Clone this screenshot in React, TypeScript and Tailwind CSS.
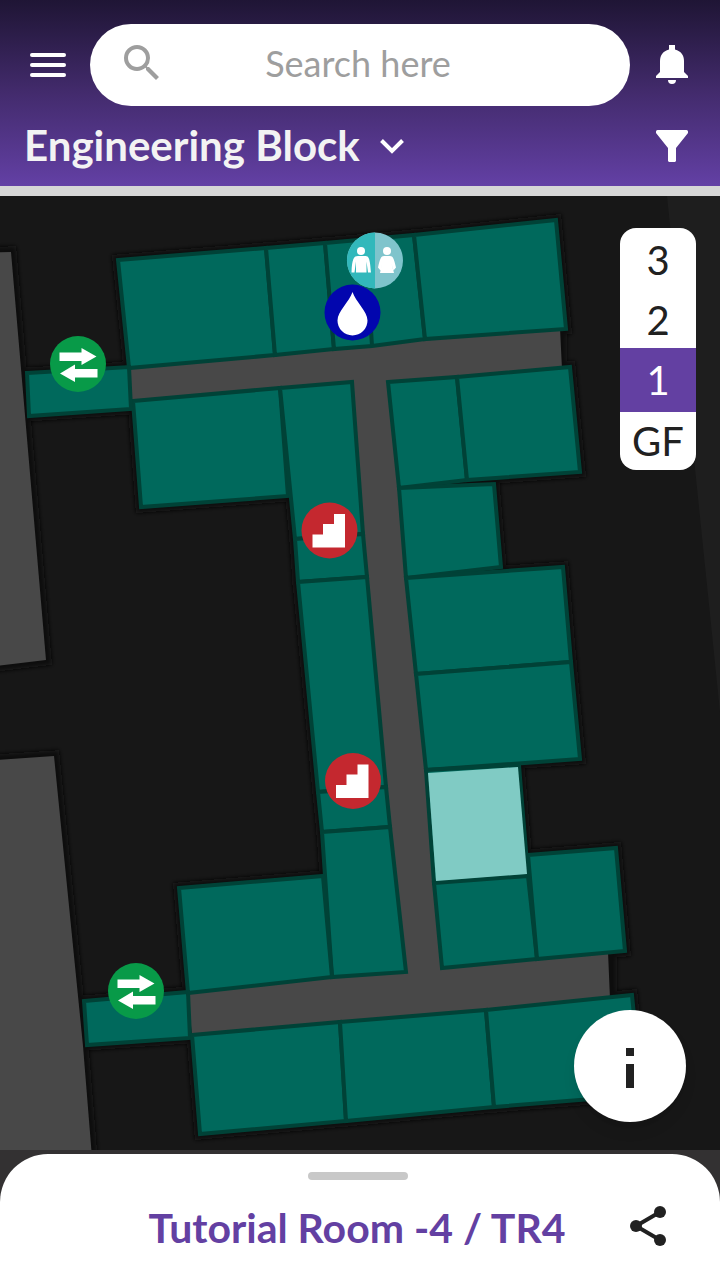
import React, { useState } from "react";

type Points = string;

const rooms: Points[] = [
  // north wing, upper row
  "118,260 266,248 275,355 129,368",
  "266,248 325,243 334,349 275,355",
  "325,243 414,235 425,339 372,346 334,349",
  "414,235 556,220 566,329 425,339",
  // north wing, lower row
  "133,401 280,388 288,496 141,507",
  "388,382 457,377 467,480 399,488",
  "457,377 570,367 580,472 467,480",
  // link bridges
  "27,373 129,367 131,409 29,416",
  "84,1001 188,992 190,1038 87,1045",
  // west side of the spine
  "280,388 352,382 363,534 295,539",
  "295,539 363,534 367,577 298,582",
  "298,582 367,577 386,787 318,792",
  "318,792 386,787 390,827 322,832",
  "322,832 390,827 406,972 332,977",
  "179,888 323,876 332,977 188,993",
  // east side of the spine
  "399,488 494,484 501,567 406,578",
  "406,578 563,567 571,662 416,674",
  "416,674 571,662 580,759 426,770",
  "426,770 519,765 528,876 434,883",
  "434,883 528,876 537,959 442,968",
  "528,855 616,848 625,951 537,959",
  // south wing
  "192,1035 340,1022 346,1121 200,1134",
  "340,1022 486,1010 494,1107 346,1121",
  "486,1010 632,995 642,1095 494,1107",
];

function Badge({ x, y, fill, children }: { x: number; y: number; fill: string; children: React.ReactNode }) {
  return (
    <g transform={`translate(${x} ${y})`}>
      <circle r="28" fill={fill} />
      {children}
    </g>
  );
}

function LinkBadge({ x, y }: { x: number; y: number }) {
  return (
    <Badge x={x} y={y} fill="#089a48">
      <path fill="#fff" d="M-18.500-11.500H3.500V-16L18.500-7.500 3.500 1V-3H-18.500ZM19.500 5H-3V.500L-18 9.500-3 18V13.500H19.500Z" />
    </Badge>
  );
}

function StairsBadge({ x, y }: { x: number; y: number }) {
  return (
    <Badge x={x} y={y} fill="#c4282f">
      <path fill="#fff" d="M-17 17V4H-6.500V-6.500H4.500V-16.500H15.500V17Z" />
    </Badge>
  );
}

function FloorPlan() {
  return (
    <svg
      className="absolute inset-0 h-full w-full"
      viewBox="0 196 720 954"
      preserveAspectRatio="xMidYMid slice"
      role="img"
      aria-label="Floor plan"
    >
      <filter id="soft" x="-5%" y="-5%" width="110%" height="110%">
        <feGaussianBlur stdDeviation="2" />
      </filter>
      <rect y="196" width="720" height="954" fill="#171717" />
      <path d="M667 196H720V712Z" fill="#1e1e1e" />
      <g fill="none" stroke="#0f0f0f" strokeWidth="11" filter="url(#soft)">
        <path d="M-20 253 11 252 46 660-20 668ZM-20 761 54 756 83 1046 93 1170H-20Z" />
        {rooms.map((p) => (
          <polygon key={p} points={p} />
        ))}
        <path d="M561 331V366M611 956V992" />
      </g>
      <g fill="#484848">
        <path d="M-20 253 11 252 46 660-20 668Z" />
        <path d="M-20 761 54 756 83 1046 93 1170H-20Z" />
        <path d="M129 366 560 328 562 369 392 384 446 966 608 952 610 999 192 1037 188 991 402 971 348 384 132 403Z" />
      </g>
      <g fill="#00695c" stroke="#004237" strokeWidth="4">
        {rooms.map((p) => (
          <polygon key={p} points={p} />
        ))}
      </g>
      <path d="M369 300 372 346" stroke="#004237" strokeWidth="4" />
      <path d="M428 773 518 767 527 874 436 881Z" fill="#80cbc4" />

      <LinkBadge x={78} y={364} />
      <LinkBadge x={136} y={991} />
      <StairsBadge x={329.500} y={530.500} />
      <StairsBadge x={353} y={781} />

      <Badge x={375} y={260.500} fill="#7fc4cc">
        <path d="M0-28A28 28 0 0 0 0 28Z" fill="#32b8bb" />
        <g fill="#fff">
          <circle cx="-14" cy="-9.500" r="4" />
          <path d="M-17-4.500H-10C-6-4.500-5-2-4 12H-7L-8.500 1V12H-19V1L-20.500 12H-23.500C-23-2-21-4.500-17-4.500Z" />
          <circle cx="12" cy="-9.500" r="4" />
          <path d="M9-4.500H15C18-4.500 19-2 21 7L18.500 10 16.500 3 19 12.500H5L7 3 5.500 10 3 7C5-2 6-4.500 9-4.500Z" />
        </g>
      </Badge>

      <Badge x={352.500} y={312.500} fill="#0206ae">
        <path d="M0-20.500C3-11 15-1 15 8A15 15 0 0 1-15 8C-15-1-3-11 0-20.500Z" fill="#fff" />
      </Badge>
    </svg>
  );
}

const floors = ["3", "2", "1", "GF"];

export default function App() {
  const [floor, setFloor] = useState("1");

  return (
    <div className="flex min-h-screen flex-col bg-[#333132] font-[Lato,'Open_Sans',sans-serif] text-[#212121]">
      <header className="flex flex-col gap-2 border-b-[10px] border-[#d6d6d6] bg-linear-to-b from-[#1f1535] via-[#432b6d] to-[#6340a5] pt-6 pb-4">
        <div className="flex items-center gap-6 px-[30px]">
          <button type="button" aria-label="Menu" className="flex w-9 flex-col gap-1.5">
            <span className="h-1 rounded-full bg-white" />
            <span className="h-1 rounded-full bg-white" />
            <span className="h-1 rounded-full bg-white" />
          </button>
          <div className="flex h-[82px] min-w-0 flex-1 items-center rounded-full bg-white pr-20 pb-1 pl-7">
            <svg viewBox="0 0 24 24" className="size-12 shrink-0" fill="#9e9e9e" aria-hidden="true">
              <path d="M15.500 14h-.79l-.28-.27A6.470 6.470 0 0 0 16 9.500 6.500 6.500 0 1 0 9.500 16c1.610 0 3.090-.59 4.230-1.570l.27.28v.79l5 4.990L20.490 19l-4.990-5zm-6 0C7.010 14 5 11.990 5 9.500S7.010 5 9.500 5 14 7.010 14 9.500 11.990 14 9.500 14z" />
            </svg>
            <input
              type="text"
              aria-label="Search"
              placeholder="Search here"
              className="w-full min-w-0 bg-transparent text-center text-4xl outline-none placeholder:text-[#9e9e9e]"
            />
          </div>
          <button type="button" aria-label="Notifications" className="flex w-9 justify-center">
            <svg viewBox="0 0 32 40" className="h-10 w-8" fill="#fff" aria-hidden="true">
              <path d="M13 0h6v4.500C25 6 28 10.500 28 16V27l4 4v2H0v-2l4-4V16C4 10.500 7 6 13 4.500ZM12 35h8a4 4 0 0 1-8 0Z" />
            </svg>
          </button>
        </div>
        <div className="flex items-center justify-between pr-8 pl-6">
          <div className="flex items-center gap-5">
            <select
              aria-label="Building"
              className="field-sizing-content h-14 appearance-none bg-transparent text-[42px] font-bold text-[#f3f3f3] outline-none"
            >
              <option>Engineering Block</option>
            </select>
            <svg viewBox="0 0 24 16" className="mt-2 h-4 w-6" fill="none" stroke="#fff" strokeWidth="4" aria-hidden="true">
              <path d="M1.500 2.500 12 13 22.500 2.500" />
            </svg>
          </div>
          <button type="button" aria-label="Filter" className="pt-2">
            <svg viewBox="0 0 32 32" className="size-8" fill="#fff" aria-hidden="true">
              <path d="M1.500 0h29A1.500 1.500 0 0 1 32 1.500V3L20 18V31l-1 1H13l-1-1V18L0 3V1.500A1.500 1.500 0 0 1 1.500 0Z" />
            </svg>
          </button>
        </div>
      </header>

      <main className="relative flex-1 overflow-hidden">
        <FloorPlan />
        <div role="group" aria-label="Floor" className="absolute top-8 right-6 flex w-19 flex-col overflow-hidden rounded-2xl bg-white">
          {floors.map((f) => (
            <button
              key={f}
              type="button"
              aria-pressed={f === floor}
              onClick={() => setFloor(f)}
              className={
                f === floor
                  ? "h-16 bg-[#6340a2] text-[40px] leading-none text-white"
                  : "h-[60px] pt-1 text-[40px] leading-none last:h-[58px] last:pt-0"
              }
            >
              {f}
            </button>
          ))}
        </div>
        <button
          type="button"
          aria-label="Room information"
          className="absolute right-[34px] bottom-7 flex size-28 items-center justify-center rounded-full bg-white shadow-lg"
        >
          <svg viewBox="0 0 8 40" className="mt-1 h-10 w-2" fill="#212121" aria-hidden="true">
            <path d="M0 0h8v8H0ZM0 16h8v24H0Z" />
          </svg>
        </button>
      </main>

      <section className="mt-1 flex flex-col items-center rounded-t-[48px] bg-white pt-[18px] pb-6">
        <span className="mr-1 h-2 w-25 rounded-full bg-[#c8c8c8]" />
        <div className="grid w-full grid-cols-[1fr_auto_1fr] items-center pt-5 pr-[54px] pl-12">
          <h1 className="col-start-2 text-[41px] leading-14 font-bold text-[#6340a2]">Tutorial Room -4 / TR4</h1>
          <button type="button" aria-label="Share" className="justify-self-end pb-1">
            <svg viewBox="0 0 36 40" className="h-10 w-9" fill="#212121" aria-hidden="true">
              <path d="M30 6 6 20 30 34" fill="none" stroke="#212121" strokeWidth="4" />
              <circle cx="30" cy="6" r="6" />
              <circle cx="6" cy="20" r="6" />
              <circle cx="30" cy="34" r="6" />
            </svg>
          </button>
        </div>
      </section>
    </div>
  );
}
